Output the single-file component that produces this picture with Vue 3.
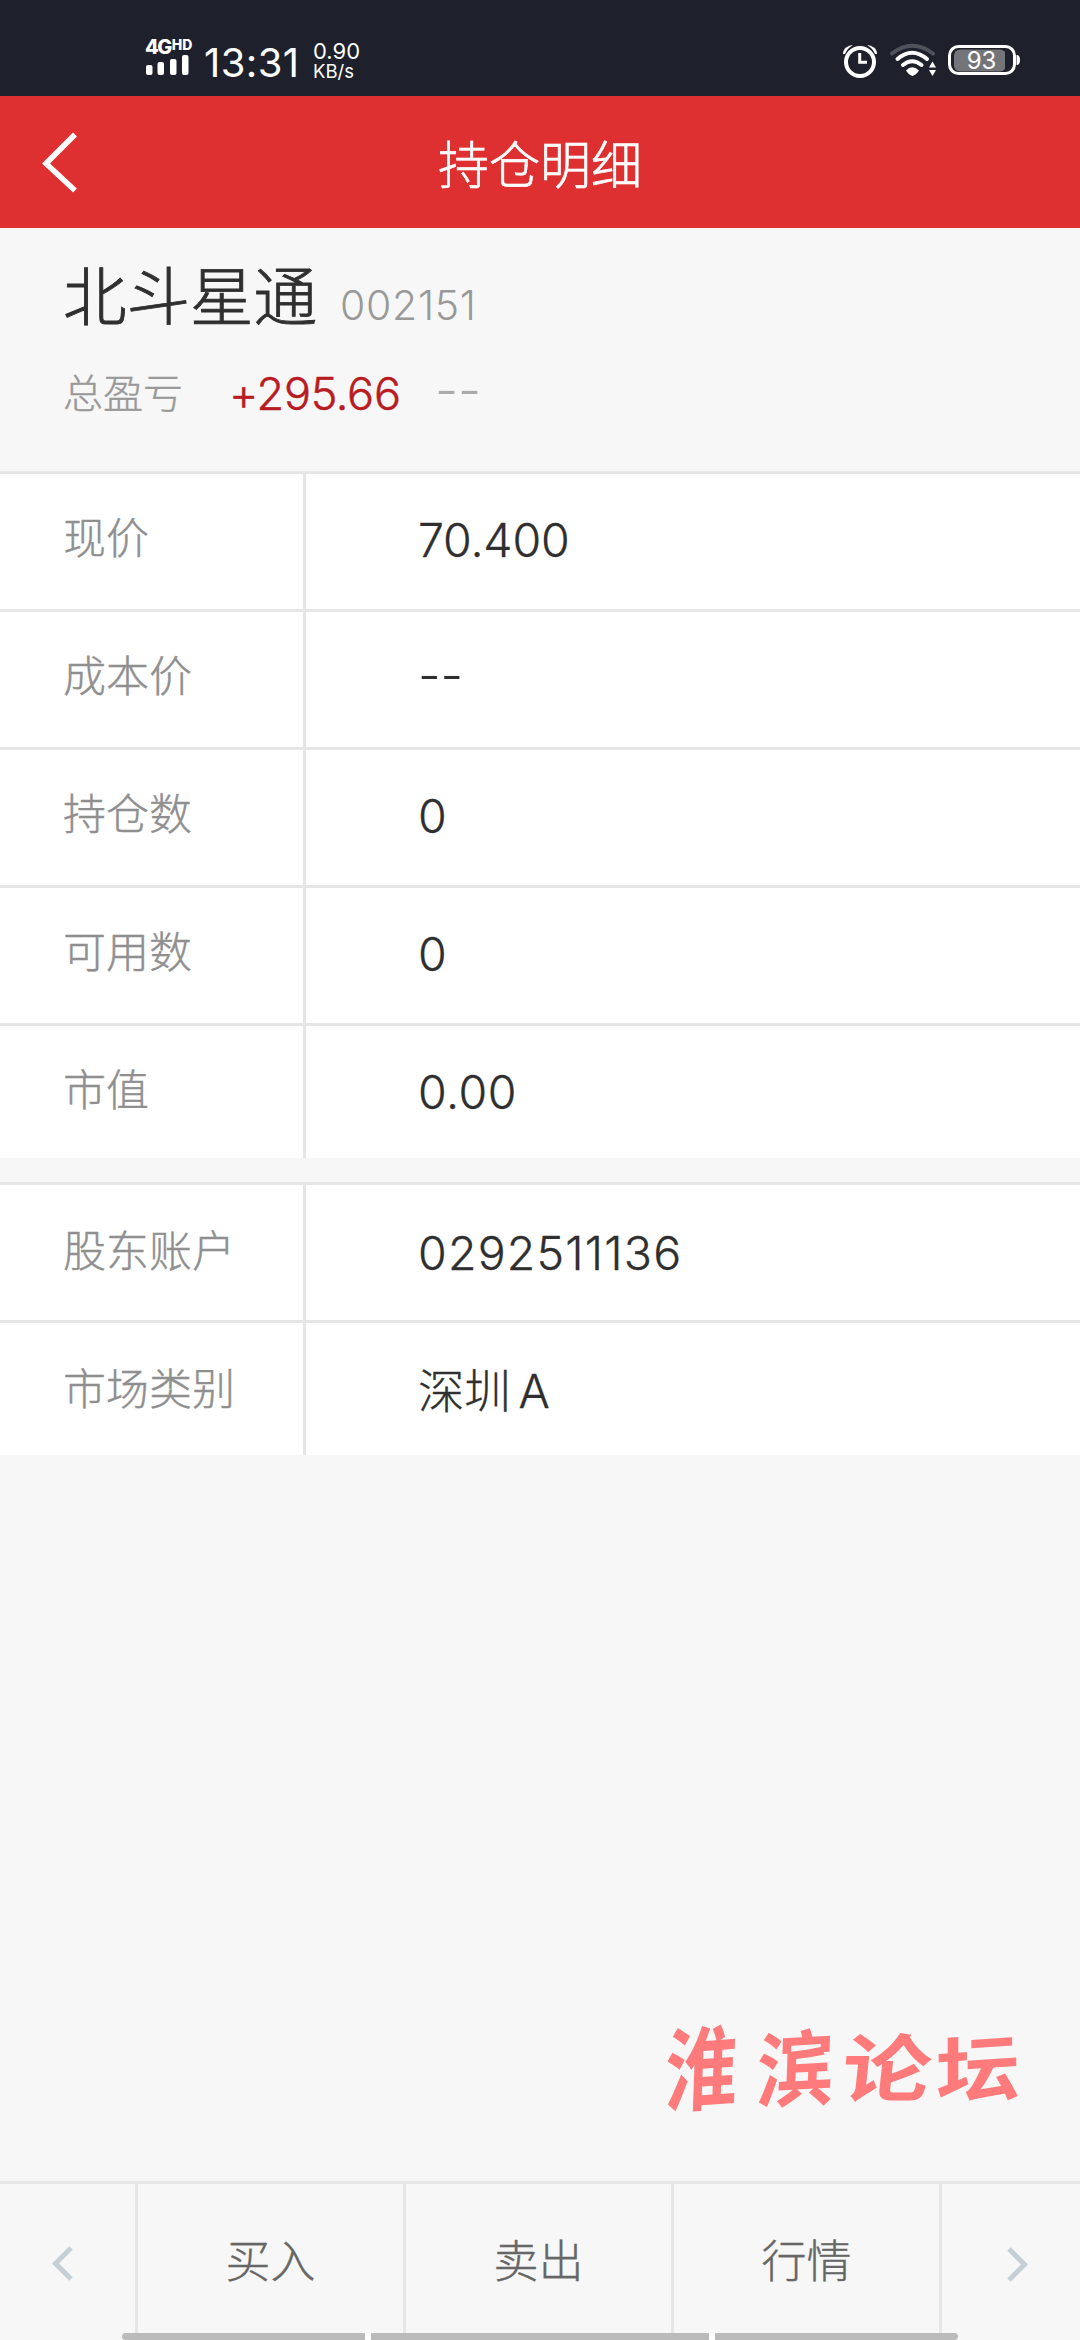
<script setup>
const groups = [
  [
    { label: '现价', value: '70.400' },
    { label: '成本价', value: '--', kind: 'dashes' },
    { label: '持仓数', value: '0' },
    { label: '可用数', value: '0' },
    { label: '市值', value: '0.00', kind: 'loose' },
  ],
  [
    { label: '股东账户', value: '0292511136', kind: 'account' },
    { label: '市场类别', value: '深圳', suffix: 'A' },
  ],
]
const actions = ['买入', '卖出', '行情']
</script>

<template>
  <div class="screen" lang="zh-CN">
    <div class="status">
      <div class="signal">
        <div class="net"><b>4G</b><b class="hd">HD</b></div>
        <svg width="44" height="20" viewBox="0 0 44 20" fill="#fff">
          <rect x="1" y="10" width="6.5" height="10" rx="2" />
          <rect x="12.5" y="7" width="6.5" height="13" rx="2" />
          <rect x="25" y="4" width="6.5" height="16" rx="2" />
          <rect x="37" y="0" width="6.5" height="20" rx="2" />
        </svg>
      </div>
      <span class="time">13:31</span>
      <div class="speed"><span>0.90</span><span class="unit">KB/s</span></div>
      <svg class="sys" width="190" height="44" viewBox="838 40 190 44" fill="none">
        <g stroke="#fff" stroke-linecap="round">
          <circle cx="860" cy="62" r="14" stroke-width="4" />
          <path d="M859.7 53v9.2h7.3" stroke-width="3" stroke-linecap="butt" />
        </g>
        <path d="M843 54q0-4 3-6.500t7-2.500q-6 3.500-8 9zM877 54q0-4-3-6.500t-7-2.500q6 3.500 8 9z" fill="#fff" />
        <path d="M892 53.500Q912 38 933 53.500" stroke="#50525b" stroke-width="4" stroke-linecap="round" />
        <path d="M897.500 59Q912 46.500 927 59" stroke="#fff" stroke-width="4" stroke-linecap="round" />
        <path d="M903 65Q912 57.500 921.500 65" stroke="#fff" stroke-width="4" stroke-linecap="round" />
        <path d="M906 70.500Q912 64 919 70.500Q916 75 912.500 76Q909 75 906 70.500z" fill="#fff" />
        <path d="M929 67.500l3.500-6 3.500 6zM929 70l3.500 6 3.500-6z" fill="#fff" />
        <rect x="954" y="49.500" width="52" height="22" rx="6" fill="#747579" />
        <path d="M1006 49h-1v23h1z" fill="#1e212b" />
        <rect x="949.500" y="46.500" width="65" height="27" rx="9" stroke="#fff" stroke-width="3" />
        <path d="M1016.500 55q3.500 0 3.500 5t-3.500 5z" fill="#fff" />
        <text x="981.500" y="68.500" text-anchor="middle" class="pct">93</text>
      </svg>
    </div>

    <header class="bar">
      <svg class="back" width="40" height="64" viewBox="0 0 40 64" fill="none">
        <path d="M35 4.500L6 33.500l29 27" stroke="#fff" stroke-width="5.500" />
      </svg>
      <h1>持仓明细</h1>
    </header>

    <section class="summary">
      <div class="stock"><span class="name">北斗星通</span><span class="code">002151</span></div>
      <div class="profit">
        <span class="plabel">总盈亏</span><span class="gain">+295.66</span><span class="dash">--</span>
      </div>
    </section>

    <section v-for="(g, gi) in groups" :key="gi" class="group">
      <div v-for="r in g" :key="r.label" class="row">
        <div class="label">{{ r.label }}</div>
        <div class="value" :class="r.kind">
          {{ r.value }}<span v-if="r.suffix" class="suffix">{{ r.suffix }}</span>
        </div>
      </div>
    </section>

    <div class="space">
      <div class="mark"><span class="m1">淮</span><span class="m2">滨</span><span class="m3">论</span><span class="m4">坛</span></div>
    </div>

    <footer class="tools">
      <div class="arrow left">
        <svg width="24" height="36" viewBox="0 0 24 36" fill="none"><path d="M21 3L5.500 18.500 21 34" stroke="#c5cfd6" stroke-width="5" /></svg>
      </div>
      <div v-for="a in actions" :key="a" class="action">{{ a }}</div>
      <div class="arrow right">
        <svg width="24" height="36" viewBox="0 0 24 36" fill="none"><path d="M3 3l15.500 15.500L3 34" stroke="#c5cfd6" stroke-width="5" /></svg>
      </div>
      <div class="gesture"><i class="short"></i><i class="long"></i><i class="short end"></i></div>
    </footer>
  </div>
</template>

<style>
body {
  background: #f7f7f7;
}
</style>

<style scoped>
.screen {
  width: 1080px;
  height: 2340px;
  display: flex;
  flex-direction: column;
  overflow: hidden;
  background: #f7f7f7;
  color: #2f2f2f;
  font-family: Inter, "Noto Sans CJK SC", sans-serif;
  font-weight: 300;
}
.status {
  height: 96px;
  flex: none;
  display: flex;
  align-items: flex-start;
  background: #1e212b;
  color: #fff;
}
.signal {
  width: 46px;
  margin: 39px 0 0 145px;
}
.net {
  display: flex;
  height: 16px;
  font-size: 20px;
  line-height: 17px;
  letter-spacing: -1.5px;
}
.net b {
  font-weight: 800;
}
.net .hd {
  font-size: 14px;
  line-height: 12px;
  letter-spacing: 0;
  margin-left: 1px;
}
.signal svg {
  display: block;
}
.time {
  width: 98px;
  margin: 38px 0 0 13px;
  font-size: 40px;
  line-height: 49px;
  font-weight: 400;
  letter-spacing: 0.4px;
}
.speed {
  display: flex;
  flex-direction: column;
  margin: 41px 0 0 11px;
  font-size: 22px;
  line-height: 20px;
  font-weight: 400;
}
.speed .unit {
  font-size: 18.5px;
  line-height: 21px;
}
.sys {
  margin: 40px 52px 0 auto;
}
.pct {
  font-size: 24px;
  font-weight: 400;
  fill: #fff;
}
.bar {
  height: 132px;
  flex: none;
  display: flex;
  align-items: center;
  background: #df3031;
  color: #fff;
}
.back {
  margin-left: 40px;
}
.bar h1 {
  flex: 1;
  margin: 7px 80px 0 0;
  text-align: center;
  font-size: 51px;
  line-height: 70px;
  font-weight: 300;
  -webkit-text-stroke: 0.6px currentColor;
}
.summary {
  height: 243px;
  flex: none;
  padding: 27px 63px 0;
  box-sizing: border-box;
}
.stock {
  display: flex;
  align-items: baseline;
  line-height: 84px;
}
.name {
  font-size: 63.5px;
  -webkit-text-stroke: 0.9px currentColor;
}
.code {
  margin-left: 23px;
  font-size: 41px;
  letter-spacing: 0.7px;
  color: #999;
}
.profit {
  display: flex;
  align-items: center;
  height: 60px;
  margin-top: 16px;
}
.plabel {
  width: 166px;
  margin-top: -4px;
  font-size: 40px;
  color: #999;
  -webkit-text-stroke: 0.4px currentColor;
}
.gain {
  width: 206px;
  font-size: 45px;
  letter-spacing: -0.3px;
  color: #b81c22;
  -webkit-text-stroke: 0.5px currentColor;
}
.dash {
  margin-top: -7px;
  font-size: 51px;
  color: #aaa;
}
.group {
  flex: none;
  margin-bottom: 24px;
}
.row {
  display: flex;
  height: 138px;
  box-sizing: border-box;
  border-top: 3px solid #e6e6e6;
  background: #fff;
}
.row:last-child {
  height: 135px;
}
.label {
  width: 306px;
  box-sizing: border-box;
  padding-left: 63px;
  border-right: 3px solid #e6e6e6;
  font-size: 43px;
  line-height: 128px;
  color: #8f8f8f;
  -webkit-text-stroke: 0.4px currentColor;
}
.value {
  padding-left: 112px;
  font-size: 46.5px;
  line-height: 133px;
  letter-spacing: -0.2px;
  -webkit-text-stroke: 0.3px currentColor;
}
.value.loose {
  letter-spacing: 0.5px;
}
.value.account {
  letter-spacing: 1.2px;
}
.value.dashes {
  font-size: 50px;
  line-height: 127px;
  -webkit-text-stroke: 0;
}
.group + .group .label {
  line-height: 132px;
}
.group + .group .value {
  line-height: 137px;
}
.suffix {
  margin-left: 8px;
}
.space {
  flex: 1;
}
.mark {
  display: flex;
  justify-content: flex-end;
  padding: 541px 54px 0 0;
  color: #ff7b7b;
  font-size: 84px;
  line-height: 100px;
  font-weight: 700;
}
.mark span {
  width: 90px;
}
.mark .m1 {
  transform: translateX(-7px) rotate(-4deg) skewX(-6deg) scale(0.86, 1.08);
}
.mark .m2 {
  transform: translateX(-3px) rotate(-3deg) skewX(-5deg) scale(0.92, 0.98);
}
.mark .m3 {
  transform: translateX(-1px) skewX(-6deg) scale(1.06, 0.88);
}
.mark .m4 {
  transform: rotate(-4deg) skewX(-4deg) scale(1, 0.86);
}
.tools {
  position: relative;
  height: 159px;
  flex: none;
  box-sizing: border-box;
  display: flex;
  border-top: 3px solid #e6e6e6;
}
.arrow {
  width: 138px;
  box-sizing: border-box;
  border-right: 3px solid #e6e6e6;
  padding: 61px 0 0 50px;
}
.arrow.right {
  border: 0;
  padding: 62px 0 0 64px;
}
.action {
  width: 268px;
  box-sizing: border-box;
  border-right: 3px solid #e6e6e6;
  text-align: center;
  font-size: 45px;
  line-height: 156px;
  color: #666;
  -webkit-text-stroke: 0.4px currentColor;
}
.gesture {
  position: absolute;
  left: 122px;
  bottom: 0;
  display: flex;
  gap: 6px;
  background: #fff;
  border-radius: 6px 6px 0 0;
}
.gesture i {
  width: 338px;
  height: 7px;
  background: #bbb;
}
.gesture .short {
  width: 243px;
  border-radius: 5px 0 0 5px;
}
.gesture .end {
  border-radius: 0 5px 5px 0;
}
</style>
